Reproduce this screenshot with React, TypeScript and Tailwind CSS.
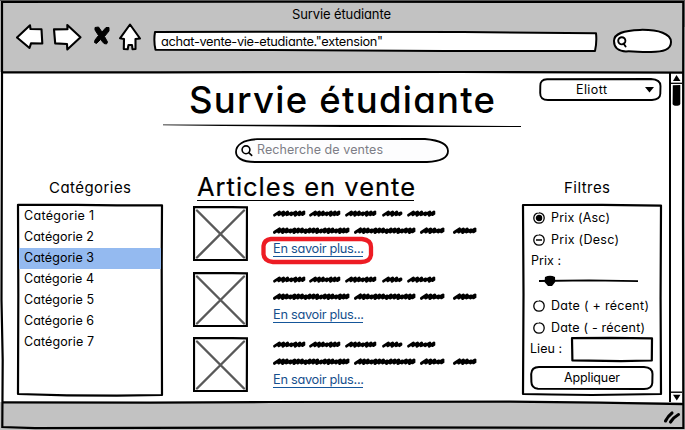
import { useLayoutEffect, useRef, useState, type ReactNode } from "react";
import { clsx } from "clsx";

/** Single line of text tracked so that it spans the given width. */
function Fit({ w, children, className }: { w: number; children: string; className?: string }) {
  const ref = useRef<HTMLSpanElement>(null);
  const [spacing, setSpacing] = useState(0);
  useLayoutEffect(() => {
    if (!ref.current) return;
    const natural = ref.current.getBoundingClientRect().width - spacing * children.length;
    setSpacing((w - natural) / (children.length - 1));
  }, [w, children]);
  return (
    <span
      ref={ref}
      className={clsx("inline-block whitespace-pre", className)}
      style={{ letterSpacing: spacing, marginRight: -spacing }}
    >
      {children}
    </span>
  );
}

/** Hand-drawn outline lying behind the content of a control. */
function Outline({ w, h, d, fill = "white", stroke = 2 }: { w: number; h: number; d: string; fill?: string; stroke?: number }) {
  return (
    <svg className="absolute inset-0 overflow-visible" width={w} height={h} viewBox={`0 0 ${w} ${h}`} fill={fill} stroke="black" strokeWidth={stroke} strokeLinejoin="round">
      <path d={d} />
    </svg>
  );
}

function scribble(start: number, end: number, y: number) {
  const steps = Math.round((end - start - 5) / 3.8);
  const step = (end - start - 5) / steps;
  let d = `M${start} ${y + 2} L${start + 5} ${y - 1.3}`;
  for (let i = 0; i < steps; i++) {
    const x = start + 5 + i * step;
    const dip = i % 3 === 1 ? 2.1 : 1.6;
    d += ` L${x - 0.8} ${y + dip} L${x + step} ${y - (i % 4 === 2 ? 0.3 : 1.2)}`;
  }
  return d + ` L${end - 1.5} ${y + 1.5} L${end} ${y + 0.5}`;
}

const LINE_ONE = [[1, 31], [37, 66], [73, 102], [110, 128], [135, 161]];
const LINE_TWO = [[1, 75], [82, 141], [148, 170], [181, 202]];

function Scribbles() {
  return (
    <svg className="block overflow-visible" width="206" height="30" fill="none" stroke="black" strokeWidth="2.8" strokeLinecap="round" strokeLinejoin="round">
      {LINE_ONE.map(([a, b]) => (
        <path key={a} d={scribble(a + 0.5, b, 7.2)} />
      ))}
      {LINE_TWO.map(([a, b]) => (
        <path key={a} d={scribble(a + 0.5, b, 24.3)} strokeWidth="3.1" />
      ))}
    </svg>
  );
}

function Article({ highlighted }: { highlighted?: boolean }) {
  return (
    <article className="flex h-[55px] items-start">
      <svg className="shrink-0" width="55" height="55" fill="none">
        <path d="M1 1.2 L24 .9 L54 1.3 L53.8 54 L1 54 Z" stroke="black" strokeWidth="2.2" />
        <path d="M4 4.5 L51 51.5 M51 4.5 L4 51.5" stroke="#595959" strokeWidth="2.4" strokeLinecap="round" />
      </svg>
      <div className="relative ml-[25px]">
        <Scribbles />
        <a className="mt-[4px] block h-[17px] w-[90px] border-b border-[#15569a] text-[12.8px] leading-[18px] text-[#164f8d]">
          <Fit w={91}>En savoir plus...</Fit>
        </a>
        {highlighted && (
          <svg className="absolute -left-[13px] top-[29px]" width="116" height="32" fill="none">
            <path d="M11 4 L102 4 Q111 5 111 12 L111 20 Q110 27 101 27 L13 27 Q4 26 3.5 19 L3.5 11 Q4 5 11 4 Z" stroke="#ed1c24" strokeWidth="4.3" />
          </svg>
        )}
      </div>
    </article>
  );
}

function Radio({ state }: { state: "on" | "mixed" | "off" }) {
  return (
    <svg className="mr-[6px] shrink-0" width="12" height="12" fill="none" stroke="black" strokeWidth="1.3">
      <path d="M6 .8 C9 .7 11.3 3 11.2 6 C11.1 9 9 11.2 6 11.2 C3 11.2 .7 9 .8 6 C.8 3 3 .8 6 .8Z" />
      {state === "on" && <circle cx="6" cy="6" r="2.6" fill="black" />}
      {state === "mixed" && <path d="M3 6 H9" strokeWidth="1.5" />}
    </svg>
  );
}

function Option({ state, w, children }: { state: "on" | "mixed" | "off"; w: number; children: string }) {
  return (
    <label className="flex h-[22px] items-center">
      <Radio state={state} />
      <Fit w={w}>{children}</Fit>
    </label>
  );
}

function Panel({ w, d, children, className }: { w: number; d: string; children: ReactNode; className?: string }) {
  return (
    <div className={clsx("relative h-[192px]", className)}>
      <Outline w={w} h={192} d={d} stroke={2.2} />
      <div className="relative">{children}</div>
    </div>
  );
}

const CATEGORIES = [1, 2, 3, 4, 5, 6, 7];

export default function App() {
  return (
    <div className="relative flex h-[430px] w-[685px] flex-col overflow-hidden bg-[#c2c2c2] font-[Inter,sans-serif] text-[12.5px] text-black [font-feature-settings:'cv11']">
      <header className="h-[72px] shrink-0">
        <div className="flex h-[29px] items-center justify-center text-[13px] leading-[29px]">
          <Fit w={99} className="relative -left-px">Survie étudiante</Fit>
        </div>
        <div className="flex items-start pl-[16px]">
          <svg className="-mt-[6px] shrink-0" width="126" height="29" fill="white" stroke="black" strokeWidth="2.1" strokeLinejoin="round">
            <path d="M1 14.5 L14 2.3 L14.5 6 L25.5 6.3 L26.3 20.5 L15 20.4 L13.5 25 Z" />
            <path d="M38 6.4 L51.5 6.3 L51.3 2 L64.5 14.3 L51.3 26.5 L51 21 L39.2 20.4 Z" />
            <path d="M79 4.5 L82.5 4 L86 9 L90 4.5 L93 4.5 L93 8 L88.5 13.5 L91.5 19 L90.5 21 L88 20.5 L84.5 16.5 L80.5 20.5 L78.5 19.5 L79 17 L82.5 12.5 L79 7 Z" fill="black" strokeWidth="1" />
            <path d="M114 1.5 L124 15.5 L119.5 16 L119.5 26 L116.5 26.2 L116 22 L112.5 22 L111.7 26.2 L107.8 26 L108 16 L104 15.3 Z" />
          </svg>
          <div className="relative ml-[11px] mt-[2px] h-[20px] w-[444px] pl-[8px] text-[12.8px] leading-[21px]">
            <Outline w={444} h={20} d="M2 1 L130 .8 L310 1 L443 2.2 Q444 11 442 20 L290 20 L120 19 L2.5 18.7 Q.5 10 2 1Z" />
            <Fit w={222} className="relative">{'achat-vente-vie-etudiante."extension"'}</Fit>
          </div>
          <div className="relative ml-[16px] h-[24px] w-[59px]">
            <Outline w={59} h={24} d="M1 12 C1 4 11 1.5 27 .9 C46 .5 58 5 58 13 C58 21 50 22.8 38 23 C28 23.5 22 22 13 22.4 C6 22.4 1 19 1 12Z" />
            <svg className="relative left-[3px] top-[7px]" width="12" height="12" fill="none" stroke="black" strokeWidth="1.9" strokeLinecap="round">
              <circle cx="5.8" cy="4.8" r="3.6" />
              <path d="M7.5 7.5 L9.6 10.5" />
            </svg>
          </div>
        </div>
      </header>

      <main className="flex h-[330px] shrink-0 bg-white pl-[2px]">
        <div className="w-[667px]">
          <div className="flex h-[98px]">
            <div className="ml-[161px] flex w-[358px] flex-col">
              <h1 className="h-[52px] pl-[26px] text-[36.5px] font-medium leading-[57px]">
                <Fit w={306}>Survie étudiante</Fit>
              </h1>
              <svg className="shrink-0" width="358" height="4">
                <path d="M0 .4 L220 1 L358 2 L358 3 L180 3 L60 2 L0 1.2Z" />
              </svg>
              <div className="relative ml-[72px] mt-[10px] flex h-[25px] w-[214px] items-start text-[#7d7d86]">
                <Outline w={214} h={25} d="M22 1.2 L190 1 Q213 3 213 13 Q213 23 192 24 L20 24 C6 24 1 19 1 14 C1 7 8 2 22 1.2Z" stroke={1.8} fill="#fdfdfe" />
                <svg className="relative ml-[6px] mt-[7px]" width="12" height="12" fill="none" stroke="black" strokeWidth="1.6" strokeLinecap="round">
                  <circle cx="5" cy="4.8" r="3.9" />
                  <path d="M8 7.8 L10.7 10.4" />
                </svg>
                <Fit w={126} className="relative ml-[4px] leading-[23px]">Recherche de ventes</Fit>
              </div>
            </div>
            <div className="relative ml-[18px] mt-[6px] flex h-[23px] w-[123px] items-start">
              <Outline w={123} h={23} d="M8 1.2 L112 1 Q121.5 1.5 121.5 8 L121.3 16 Q121 21.5 113 22 L9 22 Q1 22 1.2 15 L1.3 8 Q1 1.5 8 1.2Z" stroke={1.9} />
              <Fit w={31} className="relative ml-[37px] leading-[24px]">Eliott</Fit>
              <svg className="relative ml-auto mr-[8px] mt-[9px]" width="9" height="6">
                <path d="M0 0 H9 L4.5 5.5Z" />
              </svg>
            </div>
          </div>

          <div className="flex h-[232px]">
            <section className="ml-[15px] w-[146px]">
              <h2 className="h-[34px] pl-[32px] text-[15px] leading-[35px]">
                <Fit w={82}>Catégories</Fit>
              </h2>
              <Panel w={146} className="pt-[2px]" d="M1 .8 L60 .8 L100 1.4 L145 1.3 L144.7 60 L145 191 L100 191.6 L50 191.3 L1 190 L1.3 90 Z">
                <ul>
                  {CATEGORIES.map((n) => (
                    <li key={n} className={clsx("mx-[2px] h-[21px] pl-[5px] leading-[19px]", n === 3 && "bg-[#94baf0]")}>
                      <Fit w={70}>{`Catégorie ${n}`}</Fit>
                    </li>
                  ))}
                </ul>
              </Panel>
            </section>

            <section className="ml-[30px] w-[290px]">
              <h2 className="ml-[4px] h-[31px] w-[217px] border-b border-black text-[25.5px] leading-[34px] [-webkit-text-stroke:0.2px_black]">
                <Fit w={218}>Articles en vente</Fit>
              </h2>
              <div className="mt-[5px] flex flex-col gap-[10.5px]">
                <Article highlighted />
                <Article />
                <Article />
              </div>
            </section>

            <section className="ml-[39px] w-[140px]">
              <h2 className="h-[34px] pl-[42px] text-[15px] leading-[35px]">
                <Fit w={46}>Filtres</Fit>
              </h2>
              <Panel w={140} className="pl-[11px] pt-[2px]" d="M1 1 L80 .8 L139 1.6 L138.6 95 L139 190 L70 191 L30 190.5 L1 190 L1.5 90Z">
                <div className="pt-px">
                  <Option state="on" w={59}>Prix (Asc)</Option>
                  <Option state="mixed" w={68}>Prix (Desc)</Option>
                </div>
                <div className="-ml-[2px] h-[19px] leading-[20px]">
                  <Fit w={30}>Prix :</Fit>
                </div>
                <svg className="ml-[6px] mt-[4px] block" width="99" height="14">
                  <path d="M0 7 L50 6.3 L99 7.2" stroke="black" strokeWidth="1.8" fill="none" />
                  <path d="M6 3 Q11 .5 16 3 L16.2 8 L13 12 H9 L5.5 8Z" />
                </svg>
                <div className="mt-[7px]">
                  <Option state="off" w={98}>Date ( + récent)</Option>
                  <Option state="off" w={94}>Date ( - récent)</Option>
                </div>
                <div className="-ml-[3px] -mt-[2px] flex h-[25px] items-start">
                  <Fit w={32} className="leading-[24px]">Lieu :</Fit>
                  <div className="relative ml-auto mr-[9px] h-[25px] w-[82px]">
                    <Outline w={82} h={25} d="M1 1.2 L40 .8 L81 1.4 L80.8 23.5 L50 24.2 L1.4 23.4 L1.2 12Z" stroke={2.2} />
                  </div>
                </div>
                <button className="relative -ml-[3px] mt-[4px] block h-[24px] w-[124px] text-center leading-[22px]">
                  <Outline w={124} h={24} d="M9 1 L114 1 Q122.5 1.5 122.5 8 L122.3 17 Q122 22.7 114 23 L8 22.7 Q1.5 22 1.4 16 L1.2 8 Q1.5 1 9 1Z" />
                  <Fit w={56} className="relative">Appliquer</Fit>
                </button>
              </Panel>
            </section>
          </div>
        </div>

        <aside className="flex w-[13px] flex-col items-center border-l-2 border-black">
          <svg className="block" width="11" height="36">
            <path d="M2 9 L5.5 3 L9.5 9Z" />
            <path d="M0 11.3 H11" stroke="black" strokeWidth="1.3" />
            <path d="M1.8 13.2 L9.3 13 L9.3 32 Q9 34 6 33.8 Q2 34 1.6 32Z" />
          </svg>
          <svg className="mt-auto block" width="11" height="11">
            <path d="M0 1.2 H11" stroke="black" strokeWidth="1.4" />
            <path d="M2 3.7 H9.5 L5.8 9.5Z" />
          </svg>
        </aside>
        <div className="flex-1 bg-[#c2c2c2]" />
      </main>

      <footer className="flex flex-1 justify-end pr-[4px] pt-[7px]">
        <svg width="18" height="16" fill="none" stroke="black" strokeWidth="3.1" strokeLinecap="round">
          <path d="M2.5 12 Q5 7 9 4 M7.5 13 Q11 8 15.5 5.5" />
        </svg>
      </footer>

      <svg className="pointer-events-none absolute inset-0" width="685" height="430" fill="none" stroke="black" strokeWidth="2.2">
        <path d="M2 2 L300 1.7 L683.3 2 L683 220 L683.4 428 L350 427.3 L35 428.2 L2.3 427 L2.7 360 L1.5 300 L2 80Z" />
        <path d="M2 72.3 L160 72.3 L460 72 L683 72.6" />
        <path d="M2 402.3 L150 402.6 L270 402 L510 401.7 L600 402.6 L683 404.2" />
        <path d="M0 .5 H685 M684.6 0 V27" stroke="#555" strokeWidth="1" />
      </svg>
    </div>
  );
}
